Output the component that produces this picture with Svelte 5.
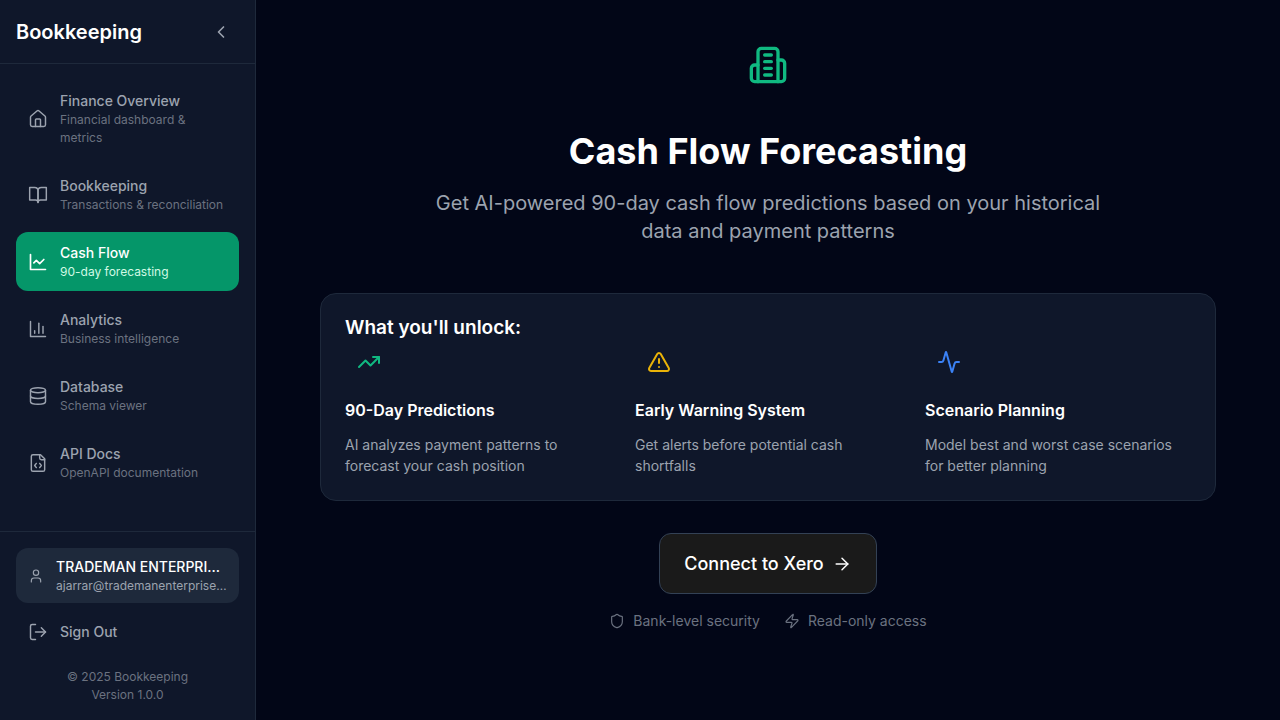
<script>
  const icons = {
    home: ['M15 21v-8a1 1 0 0 0-1-1h-4a1 1 0 0 0-1 1v8', 'M3 10a2 2 0 0 1 .709-1.528l7-5.999a2 2 0 0 1 2.582 0l7 5.999A2 2 0 0 1 21 10v9a2 2 0 0 1-2 2H5a2 2 0 0 1-2-2z'],
    book: ['M2 3h6a4 4 0 0 1 4 4v14a3 3 0 0 0-3-3H2z', 'M22 3h-6a4 4 0 0 0-4 4v14a3 3 0 0 1 3-3h7z'],
    line: ['M3 3v18h18', 'm19 9-5 5-4-4-3 3'],
    bars: ['M3 3v18h18', 'M18 17V9', 'M13 17V5', 'M8 17v-3'],
    database: ['M3 5a9 3 0 1 0 18 0a9 3 0 1 0-18 0', 'M3 5v14a9 3 0 0 0 18 0V5', 'M3 12a9 3 0 0 0 18 0'],
    code: ['M15 2H6a2 2 0 0 0-2 2v16a2 2 0 0 0 2 2h12a2 2 0 0 0 2-2V7z', 'M14 2v4a2 2 0 0 0 2 2h4', 'M10 12.5 8 15l2 2.5', 'm14 12.5 2 2.5-2 2.5'],
    user: ['M19 21v-2a4 4 0 0 0-4-4H9a4 4 0 0 0-4 4v2', 'M8 7a4 4 0 1 0 8 0a4 4 0 1 0-8 0'],
    logout: ['m16 17 5-5-5-5', 'M21 12H9', 'M9 21H5a2 2 0 0 1-2-2V5a2 2 0 0 1 2-2h4'],
    chevron: ['m15 18-6-6 6-6'],
    building: ['M6 22V4a2 2 0 0 1 2-2h8a2 2 0 0 1 2 2v18Z', 'M6 12H4a2 2 0 0 0-2 2v6a2 2 0 0 0 2 2h2', 'M18 9h2a2 2 0 0 1 2 2v9a2 2 0 0 1-2 2h-2', 'M10 6h4', 'M10 10h4', 'M10 14h4', 'M10 18h4'],
    trend: ['M22 7 13.5 15.5 8.5 10.5 2 17', 'M16 7h6v6'],
    warning: ['m21.73 18-8-14a2 2 0 0 0-3.48 0l-8 14A2 2 0 0 0 4 21h16a2 2 0 0 0 1.73-3', 'M12 9v4', 'M12 17h.01'],
    activity: ['M22 12h-2.48a2 2 0 0 0-1.93 1.46l-2.35 8.36a.25.25 0 0 1-.48 0L9.24 2.18a.25.25 0 0 0-.48 0l-2.35 8.36A2 2 0 0 1 4.49 12H2'],
    arrow: ['M5 12h14', 'm12 5 7 7-7 7'],
    shield: ['M20 13c0 5-3.5 7.5-7.66 8.95a1 1 0 0 1-.67-.01C7.5 20.5 4 18 4 13V6a1 1 0 0 1 1-1c2 0 4.5-1.2 6.24-2.72a1.17 1.17 0 0 1 1.52 0C14.51 3.81 17 5 19 5a1 1 0 0 1 1 1z'],
    zap: ['M4 14a1 1 0 0 1-.78-1.63l9.9-10.2a.5.5 0 0 1 .86.46l-1.92 6.02A1 1 0 0 0 13 10h7a1 1 0 0 1 .78 1.63l-9.9 10.2a.5.5 0 0 1-.86-.46l1.92-6.02A1 1 0 0 0 11 14z'],
  };

  const links = [
    { icon: 'home', title: 'Finance Overview', text: 'Financial dashboard & metrics' },
    { icon: 'book', title: 'Bookkeeping', text: 'Transactions & reconciliation' },
    { icon: 'line', title: 'Cash Flow', text: '90-day forecasting', active: true },
    { icon: 'bars', title: 'Analytics', text: 'Business intelligence' },
    { icon: 'database', title: 'Database', text: 'Schema viewer' },
    { icon: 'code', title: 'API Docs', text: 'OpenAPI documentation' },
  ];

  const features = [
    { icon: 'trend', tone: 'green', title: '90-Day Predictions', text: 'AI analyzes payment patterns to forecast your cash position' },
    { icon: 'warning', tone: 'yellow', title: 'Early Warning System', text: 'Get alerts before potential cash shortfalls' },
    { icon: 'activity', tone: 'blue', title: 'Scenario Planning', text: 'Model best and worst case scenarios for better planning' },
  ];
</script>

{#snippet icon(name, size, stroke = 2)}
  <svg width={size} height={size} viewBox="0 0 24 24" fill="none" stroke="currentColor" stroke-width={stroke} stroke-linecap="round" stroke-linejoin="round" aria-hidden="true">
    {#each icons[name] as d}<path {d} />{/each}
  </svg>
{/snippet}

<div class="shell">
  <aside>
    <header>
      <span class="brand">Bookkeeping</span>
      <button class="collapse" aria-label="Collapse sidebar">{@render icon('chevron', 20)}</button>
    </header>
    <nav>
      {#each links as link}
        <a href="#top" class="link" class:active={link.active} aria-current={link.active ? 'page' : undefined}>
          {@render icon(link.icon, 20, link.active ? 2 : 1.75)}
          <span class="label">
            <span class="title">{link.title}</span>
            <span class="desc">{link.text}</span>
          </span>
        </a>
      {/each}
    </nav>
    <div class="account">
      <div class="user">
        {@render icon('user', 16, 1.75)}
        <div class="label">
          <span class="title clip">TRADEMAN ENTERPRISES</span>
          <span class="desc clip">ajarrar@trademanenterprises.com</span>
        </div>
      </div>
      <button class="signout">{@render icon('logout', 20, 1.75)}Sign Out</button>
      <p class="legal">© 2025 Bookkeeping<br />Version 1.0.0</p>
    </div>
  </aside>

  <main>
    <div class="content">
      <div class="emblem">{@render icon('building', 40)}</div>
      <h1>Cash Flow Forecasting</h1>
      <p class="lead">Get AI-powered 90-day cash flow predictions based on your historical data and payment patterns</p>

      <section class="card">
        <h2>What you'll unlock:</h2>
        <div class="features">
          {#each features as feature}
            <article>
              <div class="badge {feature.tone}">{@render icon(feature.icon, 24)}</div>
              <h3>{feature.title}</h3>
              <p>{feature.text}</p>
            </article>
          {/each}
        </div>
      </section>

      <button class="connect">Connect to Xero {@render icon('arrow', 20, 1.75)}</button>
      <div class="trust">
        <span>{@render icon('shield', 16, 1.75)}Bank-level security</span>
        <span>{@render icon('zap', 16, 1.75)}Read-only access</span>
      </div>
    </div>
  </main>
</div>

<style>
  :global(body) { background: #020617; }
  .shell, .shell * { box-sizing: border-box; }
  .shell {
    display: flex;
    min-height: 100vh;
    font-family: Inter, sans-serif;
    font-size: 14px;
    background: #020617;
    color: #fff;
  }
  h1, h2, h3, p { margin: 0; }
  button { font: inherit; border: 0; background: none; color: inherit; cursor: pointer; }
  a { color: inherit; text-decoration: none; }
  svg { flex: none; display: block; }

  aside {
    width: 256px;
    flex: none;
    display: flex;
    flex-direction: column;
    background: #0f172a;
    border-right: 1px solid #1e293b;
    color: #9ca3af;
  }
  header {
    height: 64px;
    flex: none;
    display: flex;
    align-items: center;
    justify-content: space-between;
    padding: 0 16px;
    border-bottom: 1px solid #1e293b;
  }
  .brand { font-size: 20px; line-height: 28px; font-weight: 600; color: #fff; }
  .collapse { padding: 8px; }
  nav { flex: 1; display: flex; flex-direction: column; gap: 8px; padding: 16px; }
  .link { display: flex; align-items: center; gap: 12px; padding: 10px 12px; border-radius: 12px; }
  .label { min-width: 0; flex: 1; }
  .title { display: block; font-weight: 500; line-height: 21px; }
  .desc { display: block; font-size: 12px; line-height: 18px; color: #6b7280; }
  .active { background: #059669; color: #fff; }
  .active .desc { color: #d1fae5; }
  .clip { overflow: hidden; text-overflow: ellipsis; white-space: nowrap; }
  .account { padding: 16px; border-top: 1px solid #1e293b; }
  .user {
    display: flex;
    align-items: center;
    gap: 12px;
    padding: 8px 12px;
    border-radius: 12px;
    background: #1e293b;
  }
  .user .title { color: #fff; }
  .user .desc { color: #9ca3af; }
  .signout {
    display: flex;
    align-items: center;
    gap: 12px;
    width: 100%;
    margin: 8px 0 16px;
    padding: 10px 12px;
    font-weight: 500;
    line-height: 21px;
  }
  .legal { text-align: center; font-size: 12px; line-height: 18px; color: #6b7280; }

  main { flex: 1; min-width: 0; padding: 25px; }
  .content {
    display: flex;
    flex-direction: column;
    align-items: center;
    max-width: 896px;
    margin: 0 auto;
  }
  .emblem {
    display: grid;
    place-items: center;
    width: 80px;
    height: 80px;
    color: #10b981;
  }
  h1 { margin-top: 24px; font-size: 36px; line-height: 44px; font-weight: 700; text-align: center; }
  .lead {
    max-width: 672px;
    margin: 16px 0 48px;
    font-size: 20px;
    line-height: 28px;
    text-align: center;
    color: #9ca3af;
  }
  .card {
    width: 100%;
    padding: 24px;
    border: 1px solid #1e293b;
    border-radius: 16px;
    background: #0f172a;
  }
  h2 { font-size: 19px; line-height: 20px; font-weight: 600; }
  .features { display: grid; grid-template-columns: repeat(3, 1fr); gap: 24px; }
  .badge { display: grid; place-items: center; width: 48px; height: 48px; }
  .green { color: #10b981; }
  .yellow { color: #eab308; }
  .blue { color: #3b82f6; }
  h3 { margin: 12px 0; font-size: 16px; line-height: 24px; font-weight: 600; }
  article p { line-height: 21px; color: #9ca3af; }
  .connect {
    display: flex;
    align-items: center;
    gap: 8px;
    height: 61px;
    margin: 32px 0 16px;
    padding: 0 24px;
    border: 1px solid #334155;
    border-radius: 12px;
    background: #1a1a1a;
    font-size: 18px;
    font-weight: 500;
  }
  .trust { display: flex; gap: 24px; line-height: 21px; color: #6b7280; }
  .trust span { display: flex; align-items: center; gap: 8px; }
</style>
